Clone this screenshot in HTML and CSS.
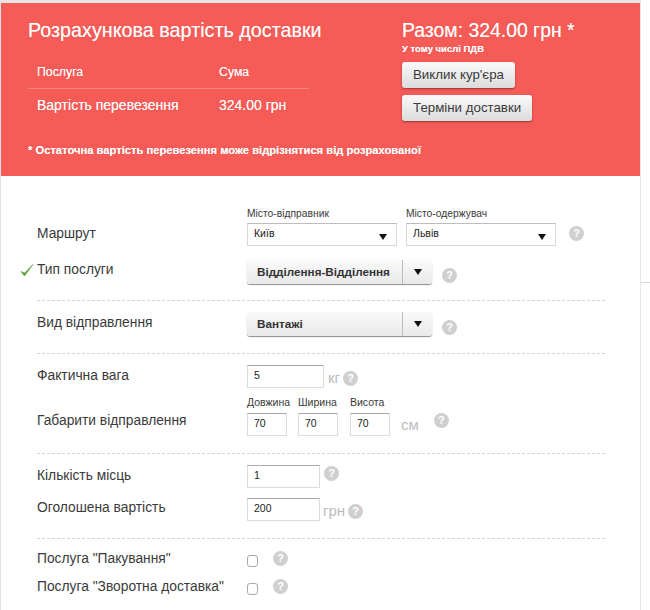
FILE: index.html
```html
<!DOCTYPE html>
<html lang="uk">
<head>
<meta charset="utf-8">
<title>Розрахункова вартість доставки</title>
<link rel="stylesheet" href="styles.css">
</head>
<body>
<div class="side-line"></div>
<main class="card">
  <header class="result">
    <div class="result-top">
      <div class="result-left">
        <h1 class="title">Розрахункова вартість доставки</h1>
        <div class="tbl-row tbl-head"><span class="tbl-a">Послуга</span><span>Сума</span></div>
        <div class="tbl-row tbl-body"><span class="tbl-a">Вартість перевезення</span><span>324.00 грн</span></div>
      </div>
      <div class="result-right">
        <div class="total">Разом: 324.00 грн *</div>
        <div class="vat">У тому числі ПДВ</div>
        <button class="btn" type="button">Виклик кур'єра</button>
        <button class="btn" type="button">Терміни доставки</button>
      </div>
    </div>
    <p class="note">* Остаточна вартість перевезення може відрізнятися від розрахованої</p>
  </header>

  <form class="form">
    <section class="sec sec-1">
      <div class="row row-route">
        <div class="lbl lbl-route">Маршрут</div>
        <div class="city">
          <div class="cap">Місто-відправник</div>
          <div class="sel"><span>Київ</span><i class="tri"></i></div>
        </div>
        <div class="city">
          <div class="cap">Місто-одержувач</div>
          <div class="sel"><span>Львів</span><i class="tri"></i></div>
        </div>
        <span class="help help-route">?</span>
      </div>
      <div class="row row-type">
        <svg class="check" width="14" height="14" viewBox="0 0 14 14"><path d="M1 8.5 L4.5 13 L13 1.5 L4.6 10 Z" fill="#5a9e3c" stroke="#5a9e3c" stroke-width=".6" stroke-linejoin="round"/></svg>
        <div class="lbl">Тип послуги</div>
        <div class="drop"><span class="drop-text">Відділення-Відділення</span><span class="drop-arrow"><i class="tri"></i></span></div>
        <span class="help help-drop">?</span>
      </div>
    </section>

    <section class="sec sec-2">
      <div class="row">
        <div class="lbl lbl-shift">Вид відправлення</div>
        <div class="drop"><span class="drop-text">Вантажі</span><span class="drop-arrow"><i class="tri"></i></span></div>
        <span class="help help-drop">?</span>
      </div>
    </section>

    <section class="sec sec-3">
      <div class="row">
        <div class="lbl lbl-shift">Фактична вага</div>
        <input class="inp inp-weight" value="5">
        <span class="unit unit-kg">кг</span>
        <span class="help help-kg">?</span>
      </div>
      <div class="row row-dims">
        <div class="lbl lbl-dims">Габарити відправлення</div>
        <div class="dim"><div class="cap cap-dim">Довжина</div><input class="inp inp-dim" value="70"></div>
        <div class="dim dim-b"><div class="cap cap-dim">Ширина</div><input class="inp inp-dim" value="70"></div>
        <div class="dim"><div class="cap cap-dim">Висота</div><input class="inp inp-dim" value="70"></div>
        <span class="unit unit-cm">см</span>
        <span class="help help-cm">?</span>
      </div>
    </section>

    <section class="sec sec-4">
      <div class="row">
        <div class="lbl lbl-shift">Кількість місць</div>
        <input class="inp inp-num" value="1">
        <span class="help help-num">?</span>
      </div>
      <div class="row row-declared">
        <div class="lbl">Оголошена вартість</div>
        <input class="inp inp-num" value="200">
        <span class="unit unit-uah">грн</span>
        <span class="help help-uah">?</span>
      </div>
    </section>

    <section class="sec sec-5">
      <div class="row row-check">
        <div class="lbl">Послуга "Пакування"</div>
        <input class="cb" type="checkbox">
        <span class="help help-cb">?</span>
      </div>
      <div class="row row-check row-check-2">
        <div class="lbl">Послуга "Зворотна доставка"</div>
        <input class="cb" type="checkbox">
        <span class="help help-cb">?</span>
      </div>
    </section>
  </form>
</main>
</body>
</html>
```

FILE: styles.css
```css
* { box-sizing: border-box; }
html, body { margin: 0; padding: 0; height: 610px; overflow: hidden; background: #fff; }
body { font-family: "Liberation Sans", Arial, sans-serif; color: #3a3a3a; position: relative; }
.side-line { position: absolute; left: 641px; top: 282px; width: 9px; height: 1px; background: #d8d8d8; }
.card { width: 641px; height: 610px; border-left: 1px solid #e2e2e2; border-right: 1px solid #e6e6e6; border-top: 3px solid #e6e6e6; }

.result { height: 173px; background: #f55b57; color: #fff; padding: 0 0 0 27px; text-shadow: 0 0 .6px rgba(255, 255, 255, .6); }
.result-top { display: flex; height: 139px; }
.result-left { width: 374px; }
.title { margin: 0; padding-top: 16px; font-size: 19.75px; line-height: 22px; font-weight: 400; white-space: nowrap; }
.tbl-row { width: 281px; display: flex; padding-left: 9px; }
.tbl-a { width: 182px; }
.tbl-head { margin-top: 23px; height: 25px; font-size: 12.3px; line-height: 16px; border-bottom: 1px solid #f7807c; }
.tbl-body { font-size: 14px; line-height: 16px; padding-top: 8px; }
.total { padding-top: 16px; font-size: 19.4px; line-height: 22px; white-space: nowrap; }
.vat { font-size: 9.5px; line-height: 12px; margin-top: 2px; font-weight: 700; }
.btn { display: block; height: 26px; margin: 0 0 7px; padding: 0 11px; font: 13.3px/24px "Liberation Sans", Arial, sans-serif; color: #3a3a3a; background: linear-gradient(#fafafa, #dcdcdc); border: 0; border-radius: 3px; box-shadow: 0 1px 2px rgba(90, 30, 30, .6); }
.vat + .btn { margin-top: 7px; }
.note { margin: 0; font-size: 11.2px; line-height: 16px; font-weight: 700; }

.form { padding: 0 35px 0 36px; }
.sec { border-bottom: 1px dashed #d4d4d4; }
.sec-1 { padding: 31px 0 16px; }
.sec-2 { padding: 11px 0 17px; }
.sec-3 { padding: 11px 0 17px; }
.sec-4 { padding: 11px 0 17px; }
.sec-5 { padding: 11px 0 0; border-bottom: 0; }

.row { display: flex; position: relative; }
.lbl { width: 210px; flex: none; font-size: 13.8px; line-height: 20px; white-space: nowrap; }
.lbl-shift { padding-top: 1px; }
.row-route { align-items: flex-end; }
.lbl-route { line-height: 25px; }
.row-type { margin-top: 14px; }
.check { position: absolute; left: -17px; top: 3px; }

.city { width: 159px; flex: none; }
.cap { font-size: 10.3px; line-height: 13px; height: 13px; margin-bottom: 3px; white-space: nowrap; }
.sel { width: 150px; height: 23px; display: flex; align-items: center; justify-content: space-between; padding: 0 9px 3px 6px; font-size: 10.5px; color: #222; border: 1px solid #d8d8d8; border-top-color: #bdbdbd; background: #fff; }
.sel .tri { margin-top: 7px; }
.tri { display: block; width: 0; height: 0; border-left: 4px solid transparent; border-right: 4px solid transparent; border-top: 6px solid #111; }

.drop { width: 185px; height: 24px; flex: none; display: flex; border-radius: 3px; background: linear-gradient(#fafafa, #e9e9e9); box-shadow: 0 1px 1px rgba(0, 0, 0, .45); }
.drop-text { width: 156px; padding-left: 10px; font-size: 11.7px; line-height: 23px; font-weight: 700; color: #333; border-right: 1px solid #bcbcbc; white-space: nowrap; }
.drop-arrow { flex: 1; display: flex; align-items: center; justify-content: center; padding-bottom: 1px; }

.help { flex: none; width: 15px; height: 15px; border-radius: 50%; background: #cfcfcf; color: #fff; font-size: 11px; line-height: 15px; font-weight: 700; text-align: center; }
.help-route { margin: 0 0 5px 4px; }
.help-drop { margin: 8px 0 0 10px; }
.help-kg { margin: 6px 0 0 3px; }
.help-cm { margin: 9px 0 0 15px; align-self: center; }
.help-num { margin: 1px 0 0 4px; }
.help-uah { margin: 6px 0 0 3px; }
.help-cb { margin: 1px 0 0 15px; }

.inp { display: block; flex: none; height: 23px; padding: 0 0 3px 6px; font: 10.5px "Liberation Sans", Arial, sans-serif; color: #222; border: 1px solid #dcdcdc; border-top-color: #aaa; border-radius: 0; background: #fff; outline: 0; }
.inp-weight { width: 77px; }
.inp-num { width: 73px; }
.inp-dim { width: 40px; }
.unit { flex: none; color: #bcbcbc; font-size: 15px; line-height: 16px; }
.unit-kg { margin: 5px 0 0 4px; }
.unit-cm { margin: 0; align-self: flex-end; padding-bottom: 3px; }
.unit-uah { margin: 5px 0 0 3px; }

.row-dims { margin-top: 7px; }
.lbl-dims { align-self: flex-end; line-height: 30px; }
.dim { width: 51px; flex: none; }
.dim-b { width: 52px; }
.cap-dim { font-size: 10.5px; line-height: 15px; height: 15px; margin-bottom: 3px; }
.row-declared { margin-top: 10px; }

.row-check { height: 18px; }
.row-check .lbl { line-height: 18px; }
.row-check-2 { margin-top: 10px; }
.cb { appearance: none; -webkit-appearance: none; display: block; flex: none; width: 11px; height: 12px; margin: 5px 0 0 0; border: 1px solid #aaa; border-radius: 3px; background: #fff; }
```
